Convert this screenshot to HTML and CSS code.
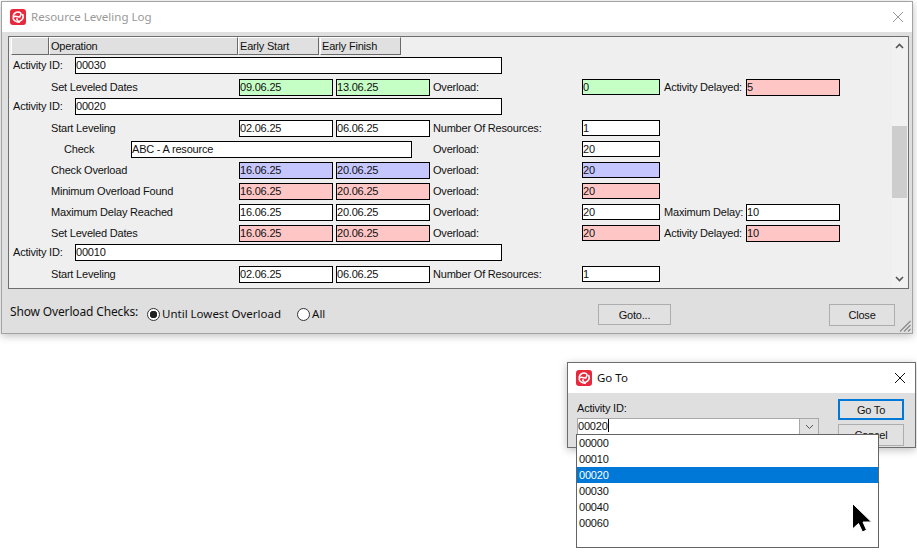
FILE: index.html
```html
<!DOCTYPE html>
<html lang="en">
    <head>
        <meta charset="utf-8">
        <title>Resource Leveling Log</title>
        <link rel="stylesheet" href="styles.css">
    </head>
    <body>

        <svg class="sprite" width="0" height="0">
            <symbol id="logo" viewBox="0 0 16 16">
                <rect width="16" height="16" rx="3" fill="#e8283c"/>
                <g fill="none" stroke="#fff" stroke-width="1.6" stroke-linecap="round">
                    <path d="M3.2 7.2C3.6 4 6.6 2.4 9.4 3.2C11 3.7 11.6 5.4 10.4 6.6"/>
                    <path d="M12.8 5.6C14 8.4 12.4 11.4 9.6 12.2C8 12.6 6.6 11.4 7 9.8"/>
                    <path d="M9.2 13.2C6.4 13.4 3.6 11.6 3.2 9.4C3 8 4.6 6.8 6.2 7.4C7.4 7.8 8.6 8.4 10 7.8"/>
                </g>
            </symbol>
        </svg>

        <div class="window log">
            <div class="window__title">
                <svg class="window__icon"><use href="#logo"/></svg>
                <span class="window__caption window__caption--inactive">Resource Leveling Log</span>
                <svg class="window__close window__close--inactive" viewBox="0 0 12 12"><path d="M1 1l10 10M11 1L1 11"/></svg>
            </div>

            <div class="log__panel">
                <div class="log__rows">
                    <div class="head">
                        <div class="head__cell head__cell--blank"></div>
                        <div class="head__cell head__cell--operation">Operation</div>
                        <div class="head__cell head__cell--date">Early Start</div>
                        <div class="head__cell head__cell--date head__cell--finish">Early Finish</div>
                    </div>

                    <div class="activity"><span class="activity__label">Activity ID:</span><span class="box activity__box">00030</span></div>
                    <div class="row row--last">
                        <span>Set Leveled Dates</span>
                        <span class="box box--date box--green">09.06.25</span>
                        <span class="box box--date box--green">13.06.25</span>
                        <span>Overload:</span>
                        <span class="box box--value box--green">0</span>
                        <span>Activity Delayed:</span>
                        <span class="box box--date box--red">5</span>
                    </div>

                    <div class="activity"><span class="activity__label">Activity ID:</span><span class="box activity__box">00020</span></div>
                    <div class="row">
                        <span>Start Leveling</span>
                        <span class="box box--date">02.06.25</span>
                        <span class="box box--date">06.06.25</span>
                        <span>Number Of Resources:</span>
                        <span class="box box--value">1</span>
                    </div>
                    <div class="row row--check">
                        <span class="row__indent">Check</span>
                        <span class="box">ABC - A resource</span>
                        <span></span>
                        <span>Overload:</span>
                        <span class="box box--value">20</span>
                    </div>
                    <div class="row">
                        <span>Check Overload</span>
                        <span class="box box--date box--blue">16.06.25</span>
                        <span class="box box--date box--blue">20.06.25</span>
                        <span>Overload:</span>
                        <span class="box box--value box--blue">20</span>
                    </div>
                    <div class="row">
                        <span>Minimum Overload Found</span>
                        <span class="box box--date box--red">16.06.25</span>
                        <span class="box box--date box--red">20.06.25</span>
                        <span>Overload:</span>
                        <span class="box box--value box--red">20</span>
                    </div>
                    <div class="row">
                        <span>Maximum Delay Reached</span>
                        <span class="box box--date">16.06.25</span>
                        <span class="box box--date">20.06.25</span>
                        <span>Overload:</span>
                        <span class="box box--value">20</span>
                        <span>Maximum Delay:</span>
                        <span class="box box--date">10</span>
                    </div>
                    <div class="row row--last">
                        <span>Set Leveled Dates</span>
                        <span class="box box--date box--red">16.06.25</span>
                        <span class="box box--date box--red">20.06.25</span>
                        <span>Overload:</span>
                        <span class="box box--value box--red">20</span>
                        <span>Activity Delayed:</span>
                        <span class="box box--date box--red">10</span>
                    </div>

                    <div class="activity"><span class="activity__label">Activity ID:</span><span class="box activity__box">00010</span></div>
                    <div class="row">
                        <span>Start Leveling</span>
                        <span class="box box--date">02.06.25</span>
                        <span class="box box--date">06.06.25</span>
                        <span>Number Of Resources:</span>
                        <span class="box box--value">1</span>
                    </div>
                </div>

                <div class="scrollbar">
                    <svg class="scrollbar__arrow" viewBox="0 0 9 6"><path d="M1 5l3.5-3.5L8 5"/></svg>
                    <div class="scrollbar__track"><div class="scrollbar__thumb"></div></div>
                    <svg class="scrollbar__arrow" viewBox="0 0 9 6"><path d="M1 1l3.5 3.5L8 1"/></svg>
                </div>
            </div>

            <div class="log__footer">
                <span class="log__filter">Show Overload Checks:</span>
                <span class="radio radio--checked"></span>
                <span class="radio__label">Until Lowest Overload</span>
                <span class="radio radio--second"></span>
                <span class="radio__label">All</span>
                <button class="button log__goto">Goto...</button>
                <button class="button log__closebtn">Close</button>
            </div>
            <svg class="grip" viewBox="0 0 12 12"><path d="M11.5 1L1 11.5M11.5 5L5 11.5M11.5 9L9 11.5"/></svg>
        </div>

        <div class="window goto">
            <div class="window__title window__title--goto">
                <svg class="window__icon"><use href="#logo"/></svg>
                <span class="window__caption">Go To</span>
                <svg class="window__close" viewBox="0 0 12 12"><path d="M1 1l10 10M11 1L1 11"/></svg>
            </div>
            <div class="goto__body">
                <div class="goto__field">
                    <label class="goto__label">Activity ID:</label>
                    <div class="combo">
                        <span class="combo__text">00020<i class="combo__caret"></i></span>
                        <span class="combo__arrow"><svg viewBox="0 0 9 6"><path d="M1 1l3.5 3.5L8 1"/></svg></span>
                    </div>
                </div>
                <div class="goto__buttons">
                    <button class="button button--default">Go To</button>
                    <button class="button button--cancel">Cancel</button>
                </div>
            </div>
        </div>

        <ul class="list">
            <li>00000</li>
            <li>00010</li>
            <li class="list__item--selected">00020</li>
            <li>00030</li>
            <li>00040</li>
            <li>00060</li>
        </ul>

        <svg class="cursor" viewBox="0 0 22 32"><path d="M1.5 1.5V27L7.5 21.5L11.5 30L15.5 28L12 20H20.5Z"/></svg>

    </body>
</html>
```

FILE: styles.css
```css
* {
    box-sizing: border-box;
}

body {
    margin: 0;
    padding: 0;
    background-color: #fff;
    font-family: "Liberation Sans", Arial, sans-serif;
    font-size: 11px;
    letter-spacing: -0.2px;
    color: #111;
    white-space: nowrap;
    overflow: hidden;
}

.sprite {
    position: absolute;
}

/* windows */

.window {
    position: absolute;
    background-color: #dfdfdf;
    border: 1px solid #a3a3a3;
    box-shadow: 0 2px 8px rgba(0,0,0,0.25);
}

.log {
    left: 1px;
    top: 1px;
    width: 912px;
    height: 333px;
}

.goto {
    left: 567px;
    top: 362px;
    width: 349px;
    height: 86px;
    border-color: #6d6d6d;
}

.window__title {
    display: flex;
    align-items: center;
    height: 30px;
    padding: 0 8px 0 8px;
    background-color: #fff;
}

.window__title--goto {
    padding: 0 9px 0 8px;
}

.window__icon {
    width: 16px;
    height: 16px;
    flex: none;
}

.window__caption {
    margin: 0 0 2px 5px;
    font-family: "Noto Sans", sans-serif;
    font-size: 11.5px;
    letter-spacing: 0;
    color: #111;
}

.window__caption--inactive {
    color: #999;
}

.window__close {
    width: 12px;
    height: 12px;
    margin-left: auto;
    fill: none;
    stroke: #111;
    stroke-width: 1;
}

.window__close--inactive {
    stroke: #999;
}

/* log panel */

.log__panel {
    display: flex;
    height: 253px;
    margin: 4px 3px 0 6px;
    background-color: #efefef;
    border: 1px solid #6e6e6e;
}

.log__rows {
    flex: 1;
    min-width: 0;
}

.head {
    display: flex;
    height: 20px;
    padding-left: 2px;
}

.head__cell {
    height: 18px;
    padding: 0 1px;
    line-height: 16px;
    background-color: #e0e0e0;
    border: 1px solid;
    border-color: #fff #696969 #696969 #fff;
}

.head__cell--blank {
    width: 38px;
}

.head__cell--operation {
    width: 189px;
}

.head__cell--date {
    width: 81px;
}

.head__cell--finish {
    margin-left: 1px;
}

.activity {
    display: flex;
    align-items: flex-start;
    height: 22px;
    padding-left: 4px;
}

.activity__label {
    width: 62px;
    line-height: 17px;
}

.activity__box {
    width: 427px;
}

.row {
    display: grid;
    grid-template-columns: 188px 97px 97px 149px 82px 82px 94px;
    align-items: start;
    height: 21px;
    padding-left: 42px;
    line-height: 17px;
}

.row--last {
    height: 19px;
}

.row--check {
    grid-template-columns: 80px 281px 21px 149px 82px;
}

.row__indent {
    padding-left: 13px;
}

.box {
    display: block;
    height: 17px;
    padding-left: 0;
    line-height: 15px;
    background-color: #fff;
    border: 1px solid #000;
    overflow: hidden;
}

.box--date {
    width: 94px;
}

.box--value {
    width: 78px;
    height: 16px;
    line-height: 14px;
}

.box--green {
    background-color: #c6ffc6;
}

.box--red {
    background-color: #ffc6c6;
}

.box--blue {
    background-color: #c6c6ff;
}

/* scrollbar */

.scrollbar {
    display: flex;
    flex-direction: column;
    align-items: center;
    width: 15px;
    margin-right: 1px;
    background-color: #f1f1f1;
}

.scrollbar__arrow {
    width: 9px;
    height: 6px;
    margin: 6px 0;
    flex: none;
    fill: none;
    stroke: #555;
    stroke-width: 1.6;
}

.scrollbar__track {
    flex: 1;
    width: 100%;
    padding-top: 71px;
}

.scrollbar__thumb {
    height: 72px;
    background-color: #cdcdcd;
}

/* footer */

.log__footer {
    display: flex;
    align-items: center;
    height: 43px;
    padding: 8px 0 0 8px;
}

.log__filter {
    width: 128px;
    margin-top: -6px;
    font-family: "Noto Sans", sans-serif;
    font-size: 12px;
    letter-spacing: -0.15px;
}

.radio {
    width: 13px;
    height: 13px;
    margin-left: 9px;
    background-color: #fff;
    border: 1px solid #333;
    border-radius: 50%;
    flex: none;
}

.radio--checked {
    background: radial-gradient(circle, #222 0 3.5px, #fff 4px);
}

.radio--second {
    margin-left: 16px;
}

.radio__label {
    margin: 0 0 2px 2px;
    font-family: "Noto Sans", sans-serif;
    font-size: 11.5px;
    letter-spacing: 0;
}

.button {
    height: 21px;
    padding: 0;
    font-family: "Liberation Sans", Arial, sans-serif;
    font-size: 11px;
    letter-spacing: -0.2px;
    color: #111;
    background-color: #e1e1e1;
    border: 1px solid #adadad;
}

.log__goto {
    width: 73px;
    margin-left: auto;
}

.log__closebtn {
    width: 66px;
    height: 22px;
    margin-left: 158px;
    margin-right: 17px;
}

.grip {
    position: absolute;
    right: 1px;
    bottom: 1px;
    width: 12px;
    height: 12px;
    fill: none;
    stroke: #8a8a8a;
    stroke-width: 1.2;
}

/* go to dialog */

.goto__body {
    display: flex;
    justify-content: space-between;
    padding: 6px 11px 0 9px;
}

.goto__label {
    display: block;
    height: 19px;
    line-height: 19px;
}

.combo {
    display: flex;
    width: 242px;
    height: 17px;
    background-color: #fff;
    border: 1px solid #a8a8a8;
}

.combo__text {
    flex: 1;
    padding-left: 0;
    line-height: 15px;
}

.combo__caret {
    display: inline-block;
    width: 1px;
    height: 13px;
    vertical-align: -2px;
    background-color: #000;
}

.combo__arrow {
    display: flex;
    align-items: center;
    justify-content: center;
    width: 19px;
    background-color: #e1e1e1;
    border-left: 1px solid #a8a8a8;
}

.combo__arrow svg {
    width: 9px;
    height: 6px;
    fill: none;
    stroke: #555;
    stroke-width: 1;
}

.goto__buttons {
    display: flex;
    flex-direction: column;
    gap: 4px;
}

.goto__buttons .button {
    width: 66px;
    flex: none;
}

.button--default {
    border: 2px solid #0078d7;
}

.button--cancel {
    height: 22px;
}

/* dropdown list */

.list {
    position: absolute;
    left: 576px;
    top: 434px;
    width: 303px;
    height: 114px;
    margin: 0;
    padding: 0;
    list-style: none;
    background-color: #fff;
    border: 1px solid #646464;
}

.list li {
    height: 16px;
    padding-left: 2px;
    line-height: 16px;
}

.list .list__item--selected {
    color: #fff;
    background-color: #0078d7;
}

.cursor {
    position: absolute;
    left: 851px;
    top: 502px;
    width: 22px;
    height: 32px;
    fill: #000;
    stroke: #fff;
    stroke-width: 1;
}
```
